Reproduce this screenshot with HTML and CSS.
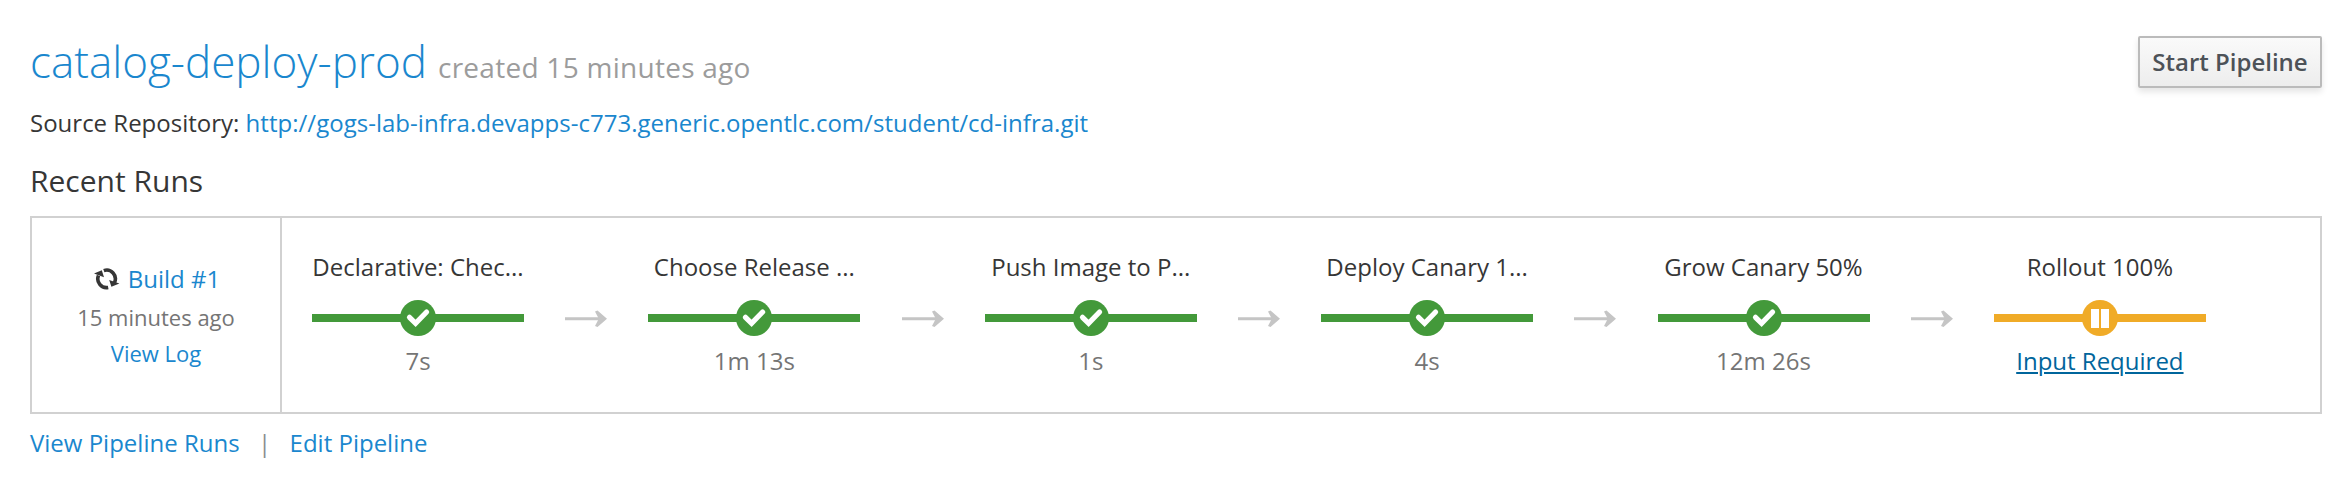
FILE: index.html
```html
<!DOCTYPE html>
<html lang="en">
<head>
<meta charset="utf-8">
<title>catalog-deploy-prod</title>
<link rel="stylesheet" href="styles.css">
</head>
<body>
<svg class="defs" width="0" height="0">
  <symbol id="check" viewBox="0 0 36 36"><circle cx="18" cy="18" r="18"/><path d="M9.500 17.300l6.100 6.100L26.600 12" fill="none" stroke="#fff" stroke-width="5.200" stroke-linecap="round" stroke-linejoin="miter"/></symbol>
  <symbol id="pause" viewBox="0 0 36 36"><circle cx="18" cy="18" r="18"/><path d="M9 9h8v19H9zM19 9h8v19h-8z" fill="#fff"/></symbol>
  <symbol id="arrow" viewBox="0 0 42 18"><path d="M0 8.800h38" fill="none" stroke="#c5c5c5" stroke-width="3"/><path d="M30 1.500L32.500 0.500 42 8.800 32.500 17 30 16 33.800 8.800z" fill="#c5c5c5"/></symbol>
</svg>
<main class="page">
  <header class="head">
    <h1 class="title"><a class="name">catalog-deploy-prod</a><small class="created">created 15 minutes ago</small></h1>
    <button class="start">Start Pipeline</button>
  </header>
  <p class="source"><span class="label">Source Repository:</span> <a class="url">http://gogs-lab-infra.devapps-c773.generic.opentlc.com/student/cd-infra.git</a></p>
  <h2 class="recent"><span>Recent Runs</span></h2>
  <section class="run">
    <div class="build">
      <div class="build-title"><svg class="sync" viewBox="0 0 26 22"><path d="M4.500 7.500A8.700 8.700 0 0 0 14.200 19.400M9.800 2.600A8.700 8.700 0 0 1 20.500 14.500" fill="none" stroke="#363636" stroke-width="3.600"/><path d="M0 5.600L7.800 2.200 10 9.200zM25.400 15.600L17.400 18.800 15.200 11.900z" fill="#363636"/></svg><a>Build #1</a></div>
      <div class="when"><span>15 minutes ago</span></div>
      <div class="log"><a>View Log</a></div>
    </div>
    <div class="stages">
      <div class="stage"><div class="stage-name"><span>Declarative: Chec...</span></div><div class="bar"><svg class="status"><use href="#check"/></svg></div><div class="time">7s</div></div>
      <svg class="arrow"><use href="#arrow"/></svg>
      <div class="stage"><div class="stage-name"><span>Choose Release ...</span></div><div class="bar"><svg class="status"><use href="#check"/></svg></div><div class="time">1m 13s</div></div>
      <svg class="arrow"><use href="#arrow"/></svg>
      <div class="stage"><div class="stage-name"><span>Push Image to P...</span></div><div class="bar"><svg class="status"><use href="#check"/></svg></div><div class="time">1s</div></div>
      <svg class="arrow"><use href="#arrow"/></svg>
      <div class="stage"><div class="stage-name"><span>Deploy Canary 1...</span></div><div class="bar"><svg class="status"><use href="#check"/></svg></div><div class="time">4s</div></div>
      <svg class="arrow"><use href="#arrow"/></svg>
      <div class="stage"><div class="stage-name"><span>Grow Canary 50%</span></div><div class="bar"><svg class="status"><use href="#check"/></svg></div><div class="time">12m 26s</div></div>
      <svg class="arrow"><use href="#arrow"/></svg>
      <div class="stage waiting"><div class="stage-name"><span>Rollout 100%</span></div><div class="bar"><svg class="status"><use href="#pause"/></svg></div><div class="time"><a class="input">Input Required</a></div></div>
    </div>
  </section>
  <footer class="links"><a>View Pipeline Runs</a><span class="sep">|</span><a>Edit Pipeline</a></footer>
</main>
</body>
</html>
```
FILE: styles.css
```css
* { box-sizing: border-box; }
body { margin: 0; background: #fff; color: #363636; font-family: "Open Sans", sans-serif; font-size: 24px; }
.defs { display: block; }
.page { height: 482px; padding: 36px 30px 0; white-space: nowrap; overflow: hidden; }
a { color: #1a87ce; }
.head { display: flex; justify-content: space-between; height: 67px; }
.title { margin: 0; padding-top: 1px; font-size: 44px; line-height: 48px; font-weight: 300; }
.created { margin-left: 11px; font-size: 28px; font-weight: 400; letter-spacing: .27px; color: #9c9c9c; }
.start { width: 184px; height: 52px; padding: 0; border: 2px solid #bbb; border-radius: 2px; background: linear-gradient(#fafafa, #ededed); box-shadow: 0 4px 6px rgba(3, 3, 3, .1); color: #4d5258; font: 600 24px/44px "Open Sans", sans-serif; }
.source { margin: 0; line-height: 40px; }
.url { letter-spacing: .02px; }
.recent { margin: 20px 0 17px; font-size: 30px; line-height: 36px; font-weight: 400; }
.run { display: flex; height: 198px; border: 2px solid #d1d1d1; }
.build { width: 250px; padding-top: 42px; border-right: 2px solid #d1d1d1; text-align: center; line-height: 36px; }
.build-title { display: flex; justify-content: center; align-items: center; gap: 8px; height: 38px; padding-left: 2px; }
.sync { width: 26px; height: 22px; }
.when { font-size: 22px; line-height: 38px; height: 36px; color: #757575; }
.log { font-size: 22px; line-height: 38px; }
.stages { display: flex; padding: 31px 0 0 30px; gap: 41.2px; }
.stage { width: 212px; text-align: center; fill: #43993a; }
.stage-name { height: 51px; line-height: 36px; }
.bar { display: flex; justify-content: center; height: 36px; background: linear-gradient(#43993a, #43993a) center / 100% 8px no-repeat; }
.status { width: 36px; height: 36px; }
.time { margin-top: 7px; line-height: 36px; color: #757575; }
.arrow { width: 42px; height: 18px; margin-top: 61px; flex: none; }
.waiting { fill: #f0ab27; }
.waiting .bar { background-image: linear-gradient(#f0ab27, #f0ab27); }
.input { color: #00659c; text-decoration: underline; text-decoration-thickness: 2px; text-underline-offset: 2px; }
.links { display: flex; padding-top: 12px; line-height: 34px; }
.sep { width: 50px; text-align: center; color: #8b8d8f; }
```
